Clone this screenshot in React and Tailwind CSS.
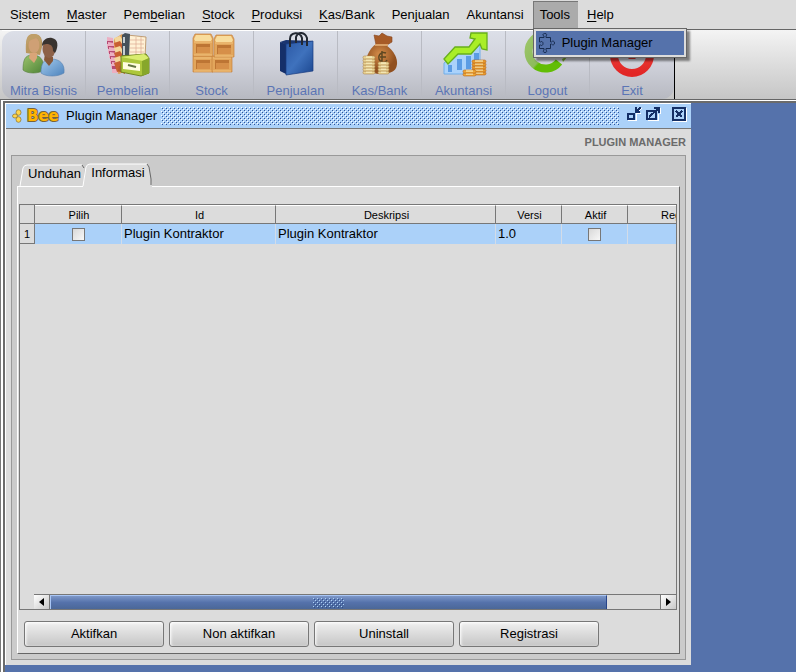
import React, { useState } from "react";

const MENUS = [
  { label: "Sistem", key: 1 },
  { label: "Master", key: 0 },
  { label: "Pembelian", key: 3 },
  { label: "Stock", key: 0 },
  { label: "Produksi", key: 0 },
  { label: "Kas/Bank", key: 0 },
  { label: "Penjualan", key: 3 },
  { label: "Akuntansi", key: -1 },
  { label: "Tools", key: -1, open: true },
  { label: "Help", key: 0 },
];

const COLUMNS = ["Pilih", "Id", "Deskripsi", "Versi", "Aktif", "Registrasi"];

// label with its keyboard shortcut letter underlined
function Mnemonic({ text, index }) {
  if (index < 0) return text;
  return (
    <>
      {text.slice(0, index)}
      <span className="underline underline-offset-2">{text[index]}</span>
      {text.slice(index + 1)}
    </>
  );
}

// raised dots used on title bars and scroll thumbs
function Bumps({ id, light, dark, className }) {
  return (
    <svg className={className} shapeRendering="crispEdges" aria-hidden="true">
      <defs>
        <pattern id={id} width="4" height="4" patternUnits="userSpaceOnUse">
          <path d="M0 0h1v1H0zM2 2h1v1H2z" fill={light} />
          <path d="M1 1h1v1H1zM3 3h1v1H3z" fill={dark} />
        </pattern>
      </defs>
      <rect width="100%" height="100%" fill={`url(#${id})`} />
    </svg>
  );
}

function PeopleIcon() {
  return (
    <>
      <defs>
        <linearGradient id="green-body" x1="0" y1="0" x2="1" y2="1">
          <stop offset="0" stopColor="#9dc46e" />
          <stop offset="1" stopColor="#4d8236" />
        </linearGradient>
        <linearGradient id="blue-body" x1="0" y1="0" x2="1" y2="1">
          <stop offset="0" stopColor="#a5cbed" />
          <stop offset="1" stopColor="#4d83bd" />
        </linearGradient>
      </defs>
      <path d="M6 22C5 10 7 3 14 3c6 0 9 4 8 13l-2 8z" fill="#b9975f" />
      <path d="M3 39c0-10 2-15 9-15 8 0 12 4 12 15-5 4-17 4-21 0z" fill="url(#green-body)" stroke="#557d3b" strokeWidth=".6" />
      <path d="M10 22h7v5l-3 5-5-5z" fill="#d9a578" />
      <ellipse cx="14" cy="14" rx="5.500" ry="8" fill="#cfa075" />
      <path d="M7 19c-1-10 5-10 9-12 3 1 4 4 4 9 3-9-1-13-7-13S5 8 7 19z" fill="#bf9f69" />
      <path d="M21 42c0-10 3-14 10-14 9 0 14 5 13 14-6 4-18 4-23 0z" fill="url(#blue-body)" stroke="#557fae" strokeWidth=".6" />
      <path d="M25 23l8 3v4l-4 5-5-6z" fill="#87583a" />
      <ellipse cx="29" cy="18" rx="6.500" ry="9" fill="#8d6148" />
      <path d="M22 15c0-6 5-9 10-8 6 1 7 8 3 15l-2-2c0-4-1-6-5-7-2 0-4 0-6 2z" fill="#39332f" />
    </>
  );
}

function FilesIcon() {
  return (
    <>
      <path d="M10 8l8-5 4 3v34l-7 3-7-4z" fill="#de9d55" />
      <path d="M23 4l19 2-1 21-19 3z" fill="#fff1d5" stroke="#b58a5a" strokeWidth=".8" />
      <path d="M26 9h14M26 13h14M26 17h14M26 21h14M32 6v19M37 6v19" stroke="#dca993" strokeWidth=".7" />
      <path d="M18 4l3-2 5 1-1 24-7 1z" fill="#46515a" />
      <path d="M19 6h2v6h-2zM19 15h2v9h-2z" fill="#c6ced2" />
      {[0, 1, 2, 3, 4, 5].map((i) => (
        <g key={i}>
          <path d={`M${3 + i} ${6 + i * 5}l6 1v10h-6z`} fill="#ecafc2" />
          <path d={`M${3 + i} ${10 + i * 5}h6v3h-6z`} fill="#b64a72" />
          <path d={`M10 ${7 + i * 5}l6-2 2 3v7l-5 1z`} fill={i % 2 ? "#c85f32" : "#f4d79b"} />
        </g>
      ))}
      <path d="M15 35l6 1v7l-7-3z" fill="#b9592c" />
      <path d="M17 25l25-2 3 4v15l-8 3-20-4z" fill="#adc73c" stroke="#718622" />
      <path d="M17 26l22 4 6-3-5-4z" fill="#d9ec6e" />
      <path d="M38 30l7-3v15l-7 3z" fill="#87a72b" />
      <path d="M19 31l17 2v7l-17-2z" fill="#fffde0" />
      <path d="M24 34l8 2" stroke="#637341" strokeWidth="2" />
    </>
  );
}

function Crate({ x, y, top }) {
  return (
    <g transform={`translate(${x} ${y})`}>
      <path d={top ? "M0 4l2-4h16l2 4v18H0z" : "M0 0h20v16H0z"} fill="#e2a65c" stroke="#c5813d" strokeWidth=".7" />
      {top && <path d="M1 5l2-4h14l2 4-1 2H2z" fill="#f8dc9c" />}
      <path d={top ? "M3 10h14v9H3z" : "M3 4h14v9H3z"} fill="#bd7534" />
      <path d={top ? "M4 13h13v6H4z" : "M4 7h13v6H4z"} fill="#d68f49" />
      <path d={top ? "M1 21h18M1 8h18" : "M1 15h18M1 2h18"} stroke="#f1c27c" />
    </g>
  );
}

function CratesIcon() {
  return (
    <>
      <Crate x={5} y={25} />
      <Crate x={24} y={25} />
      <Crate x={5} y={3} top />
      <Crate x={26} y={4} top />
    </>
  );
}

function BagIcon() {
  return (
    <>
      <defs>
        <linearGradient id="bag" x1="0" y1="0" x2="1" y2="1">
          <stop offset="0" stopColor="#2b58a5" />
          <stop offset=".5" stopColor="#3f72bd" />
          <stop offset="1" stopColor="#1b468f" />
        </linearGradient>
      </defs>
      <path d="M8 11l6 2v30l-6-3z" fill="#152f69" />
      <path d="M8 11l6-2 27 1-3 2-24 2z" fill="#1a3571" />
      <path d="M14 13l27-3v30l-27 4z" fill="url(#bag)" stroke="#193b80" strokeWidth=".7" />
      <path d="M18 16V8c0-7 10-8 12-1v7M24 12V6c2-6 9-5 11 1v8" fill="none" stroke="#222832" strokeWidth="2" />
    </>
  );
}

function Coins({ x, y, rows, width, color, edge }) {
  return Array.from({ length: rows }, (_, i) => (
    <g key={i}>
      <rect x={x} y={y - i * 3} width={width} height="3" rx="1.500" fill={color} stroke={edge} strokeWidth=".6" />
      <path d={`M${x + 3} ${y + 1 - i * 3}h${width - 6}`} stroke="#fffbd1" />
    </g>
  ));
}

function MoneyIcon() {
  return (
    <>
      <defs>
        <radialGradient id="sack" cx=".45" cy=".35">
          <stop offset="0" stopColor="#d8904c" />
          <stop offset="1" stopColor="#91501f" />
        </radialGradient>
      </defs>
      <path d="M18 4l5 1 3-3 5 3 5 1v5l-5 3H20z" fill="#a75b27" stroke="#84451f" strokeWidth=".6" />
      <path d="M20 13c-7 5-12 15-9 24 4 8 25 8 29 0 4-9-4-20-12-24z" fill="url(#sack)" />
      <path d="M19 14h13" stroke="#d9a168" strokeWidth="2" />
      <path d="M30 22c-7-3-10 7-4 9 2 1 4 0 5-2M24 26h6M26 20v12" fill="none" stroke="#5e4721" strokeWidth="1.500" />
      <Coins x={7} y={40} rows={6} width={12} color="#e9d394" edge="#ae884b" />
      <Coins x={22} y={40} rows={4} width={11} color="#e9d394" edge="#ae884b" />
    </>
  );
}

function ChartIcon() {
  return (
    <>
      <path d="M4 32l13-10 14-1 9-9v31H4z" fill="#aad2fb" stroke="#70aee9" />
      <path d="M8 34h4v7H8zM17 28h5v11h-5zM26 25h5v13h-5zM34 22h5v12h-5z" fill="#5b9ce4" />
      <path d="M4 28l11-12h14l6-8-5-1 1-5h16v17l-5-1-2-5-9 10H18L8 33z" fill="#a9ee27" stroke="#67af1c" strokeWidth="1.300" />
      <Coins x={32} y={41} rows={5} width={14} color="#e79a2d" edge="#b9681d" />
      <Coins x={23} y={42} rows={2} width={13} color="#efa634" edge="#b9681d" />
    </>
  );
}

function LogoutIcon() {
  return (
    <>
      <defs>
        <linearGradient id="ring-green" x1="0" y1="0" x2="1" y2="1">
          <stop offset="0" stopColor="#9dc66a" />
          <stop offset=".55" stopColor="#8dbb5c" />
          <stop offset=".6" stopColor="#62bd05" />
        </linearGradient>
      </defs>
      <path d="M34 9a17 17 0 1 0 1 22" fill="none" stroke="url(#ring-green)" strokeWidth="8" />
      <path d="M38 28l6-3-5 6z" fill="#78a831" />
    </>
  );
}

function PowerIcon() {
  return (
    <>
      <defs>
        <linearGradient id="ring-red" x1="0" y1="0" x2="0" y2="1">
          <stop offset="0" stopColor="#f04a42" />
          <stop offset="1" stopColor="#e22626" />
        </linearGradient>
      </defs>
      <circle cx="24" cy="24" r="18" fill="none" stroke="url(#ring-red)" strokeWidth="8" />
      <path d="M24 8v20" stroke="#db3030" strokeWidth="7" />
    </>
  );
}

function PuzzleIcon() {
  return (
    <svg viewBox="0 0 18 20" className="h-5 w-[18px]" fill="none" stroke="#182c50" aria-hidden="true">
      <path d="M1.500 4.500H6V3c-2-1-1-2.500 1-2.500S9 2 8 3v1.500h4.500V9h1c1-1.500 3-1 3 1s-2 2.500-3 1h-1v4.500H8V17c1 1 1 2.500-1 2.500S5 18 6 17v-1.500H1.500V12h1c1 1 2.500.500 2.500-1.500S3.500 8 2.500 9h-1z" />
    </svg>
  );
}

function BeeLogo() {
  return (
    <div className="flex shrink-0 items-center gap-0.5" aria-label="Bee">
      <svg viewBox="0 0 10 14" className="h-[14px] w-[10px]" aria-hidden="true">
        <g fill="#ffd64d" stroke="#8c7128" strokeWidth=".7">
          <ellipse cx="6.500" cy="3.500" rx="2.500" ry="2.800" />
          <ellipse cx="3" cy="7" rx="2.500" ry="2" />
          <ellipse cx="6.500" cy="10.500" rx="2.500" ry="2.800" />
        </g>
      </svg>
      <svg viewBox="0 0 38 20" className="h-5 w-[38px]" aria-hidden="true">
        <text
          x="3"
          y="15"
          fontFamily="DejaVu Sans, sans-serif"
          fontSize="15"
          fontWeight="700"
          fill="#ffb400"
          stroke="#75633c"
          strokeWidth="2"
          strokeLinejoin="round"
          paintOrder="stroke"
        >
          Bee
        </text>
      </svg>
    </div>
  );
}

const TOOLS = [
  { label: "Mitra Bisnis", Icon: PeopleIcon },
  { label: "Pembelian", Icon: FilesIcon },
  { label: "Stock", Icon: CratesIcon },
  { label: "Penjualan", Icon: BagIcon },
  { label: "Kas/Bank", Icon: MoneyIcon },
  { label: "Akuntansi", Icon: ChartIcon },
  { label: "Logout", Icon: LogoutIcon },
  { label: "Exit", Icon: PowerIcon },
];

function MenuBar() {
  return (
    <nav className="flex h-[29px] shrink-0 gap-px bg-[#dcdcdc] pt-px pl-0.5">
      {MENUS.map((m) => (
        <div key={m.label} className="relative">
          <button
            className={
              m.open
                ? "h-7 border-y border-l border-[#777] border-b-[#ababab] bg-[#ababab] pr-2 pl-1.5"
                : "h-7 px-2"
            }
          >
            <Mnemonic text={m.label} index={m.key} />
          </button>
          {m.open && (
            <div className="absolute top-[27px] left-0 z-10 border border-[#666] bg-[#dcdcdc] p-0.5 shadow-[3px_3px_2px_rgba(0,0,0,0.45)]">
              <button className="flex h-6 w-[148px] items-center gap-1.5 bg-[#5572ab] pl-0.5 whitespace-nowrap">
                <PuzzleIcon />
                Plugin Manager
              </button>
            </div>
          )}
        </div>
      ))}
    </nav>
  );
}

function ToolBar() {
  return (
    <div className="flex h-[71px] shrink-0 border-t border-b border-[#666] bg-linear-to-b from-[#f4f4f4] to-[#c6c6c6] pl-0.5">
      <div className="flex border-t border-r border-t-white border-r-black">
        <div className="flex overflow-hidden rounded-xl bg-linear-to-b from-[#dcdfe8] via-[#cfd1da] to-[#b7b9c1]">
          {TOOLS.map(({ label, Icon }) => (
            <button
              key={label}
              className="flex w-[84px] flex-col items-center border-r border-[#b9bbc3] text-[#5b75b5] last:border-r-0"
            >
              <svg viewBox="0 0 48 48" className="size-12 shrink-0" aria-hidden="true">
                <Icon />
              </svg>
              <span className="pt-1 leading-4">{label}</span>
            </button>
          ))}
        </div>
      </div>
    </div>
  );
}

function TitleBar() {
  return (
    <div className="flex h-[25px] shrink-0 items-center border-b border-[#777] bg-[#abd1f9] pr-1 pl-1.5">
      <BeeLogo />
      <h1 className="ml-1 whitespace-nowrap">Plugin Manager</h1>
      <Bumps id="title-bumps" light="#ffffff" dark="#2f539b" className="ml-1 h-[18px] min-w-0 flex-1" />
      <div className="mb-1 ml-2 flex items-center">
        <button aria-label="Minimize" className="mr-1">
          <svg viewBox="0 0 15 16" className="h-4 w-[15px]" shapeRendering="crispEdges" fill="none">
            <path d="M1 14.500h8V7M9 7.500h5M12 5l3-3" stroke="#fff" />
            <path d="M1 8h6v5H1z" stroke="#142f66" strokeWidth="2" />
            <path d="M8 1h2v2l3-2h1v2l-3 2h2v2H8z" fill="#142f66" />
          </svg>
        </button>
        <button aria-label="Maximize" className="mr-2.5">
          <svg viewBox="0 0 15 16" className="h-4 w-[15px]" shapeRendering="crispEdges" fill="none">
            <path d="M2 14.500h10V8M14.500 2v6" stroke="#fff" />
            <path d="M1 5h9v8H1z" stroke="#142f66" strokeWidth="2" />
            <path d="M3 11l9-8" stroke="#142f66" strokeWidth="2" />
            <path d="M8 1h6v6h-2V3H8z" fill="#142f66" />
          </svg>
        </button>
        <button aria-label="Close">
          <svg viewBox="0 0 16 16" className="size-4" shapeRendering="crispEdges" fill="none">
            <path d="M15.500 2v13.500H2" stroke="#fff" />
            <path d="M2 2h12v12H2z" stroke="#142f66" strokeWidth="2" />
            <path d="M5 5l6 6M11 5l-6 6" stroke="#142f66" strokeWidth="2" />
          </svg>
        </button>
      </div>
    </div>
  );
}

function Tabs() {
  return (
    <div role="tablist" className="relative z-[1] -mb-px flex items-end pl-0.5">
      <button role="tab" aria-selected="false" className="relative mb-px h-[22px] w-[67px] pb-0.5 pl-1">
        <svg viewBox="0 0 67 22" className="absolute inset-0 h-full w-full" fill="none" aria-hidden="true">
          <path d="M1 22L4 4q1-3 4-3h55l2 3v18z" fill="#d6d6d6" />
          <path d="M1 22L4 4q1-3 4-3h55" stroke="#fff" />
          <path d="M63 1l2 3" stroke="#666" />
        </svg>
        <span className="relative">Unduhan</span>
      </button>
      <button role="tab" aria-selected="true" className="relative -ml-1 h-6 w-[72px] pb-1">
        <svg viewBox="0 0 72 24" className="absolute inset-0 h-full w-full" fill="none" aria-hidden="true">
          <path d="M1 24L4 4q1-3 4-3h57l2 3 3 20z" fill="#dcdcdc" />
          <path d="M1 23L4 4q1-3 4-3h57" stroke="#fff" />
          <path d="M65 1l2 3 2 12v6" stroke="#666" />
        </svg>
        <span className="relative">Informasi</span>
      </button>
    </div>
  );
}

function CheckBox({ label, checked, onChange }) {
  return (
    <input
      type="checkbox"
      aria-label={label}
      checked={checked}
      onChange={onChange}
      className="mx-auto block size-[13px] appearance-none border border-[#777] bg-linear-to-br from-[#d8d8d8] to-[#f8f8f8] checked:from-[#5572ab]"
    />
  );
}

function PluginTable() {
  const [picked, setPicked] = useState(false);
  const [active, setActive] = useState(false);

  return (
    <div className="min-h-0 flex-1 overflow-hidden">
      <table className="w-[722px] table-fixed border-separate border-spacing-0">
        <colgroup>
          <col className="w-[15px]" />
          <col className="w-[87px]" />
          <col className="w-[154px]" />
          <col className="w-[220px]" />
          <col className="w-[66px]" />
          <col className="w-[66px]" />
          <col className="w-[114px]" />
        </colgroup>
        <thead>
          <tr className="h-[19px] text-[11px] leading-4">
            <td className="border-r border-b border-[#777] p-0" />
            {COLUMNS.map((c) => (
              <th key={c} scope="col" className="border-t border-r border-b border-t-white border-r-[#777] border-b-[#777] p-0 pl-0.5 font-normal">
                {c}
              </th>
            ))}
          </tr>
        </thead>
        <tbody>
          <tr className="h-5 bg-[#abd1f9]">
            <th scope="row" className="border-r border-b border-[#777] bg-[#dcdcdc] p-0 text-[11px] font-normal">
              1
            </th>
            <td className="border-r border-[#d3dce8] p-0">
              <CheckBox label="Pilih" checked={picked} onChange={() => setPicked(!picked)} />
            </td>
            <td className="border-r border-[#d3dce8] p-0 pl-0.5">Plugin Kontraktor</td>
            <td className="border-r border-[#d3dce8] p-0 pl-0.5">Plugin Kontraktor</td>
            <td className="border-r border-[#d3dce8] p-0 pl-0.5">1.0</td>
            <td className="border-r border-[#d3dce8] p-0">
              <CheckBox label="Aktif" checked={active} onChange={() => setActive(!active)} />
            </td>
            <td className="p-0" />
          </tr>
        </tbody>
      </table>
    </div>
  );
}

function ScrollBar() {
  return (
    <div className="ml-3.5 flex h-[15px] shrink-0 border-t border-[#777]">
      <button aria-label="Scroll left" className="flex w-4 items-center justify-center border-r border-[#777] bg-linear-to-br from-white to-[#c8c8c8]">
        <svg viewBox="0 0 5 8" className="h-2 w-[5px]" aria-hidden="true">
          <path d="M5 0v8L0 4z" />
        </svg>
      </button>
      <div className="flex min-w-0 flex-1 pr-[53px]">
        <div className="flex flex-1 items-center justify-center border-t border-r border-l border-t-[#a9c6f5] border-r-[#27448a] border-l-[#a9c6f5] bg-linear-to-b from-[#7d97c8] via-[#5572ab] to-[#4b6798]">
          <Bumps id="thumb-bumps" light="#abd1f9" dark="#2f4f8f" className="h-2.5 w-[31px]" />
        </div>
      </div>
      <button aria-label="Scroll right" className="flex w-4 items-center justify-center border-l border-[#777] bg-linear-to-br from-white to-[#c8c8c8]">
        <svg viewBox="0 0 5 8" className="h-2 w-[5px]" aria-hidden="true">
          <path d="M0 0v8l5-4z" />
        </svg>
      </button>
    </div>
  );
}

function PluginWindow() {
  return (
    <section className="flex min-h-0 flex-1 flex-col border-t border-l border-white bg-[#dcdcdc]">
      <TitleBar />
      <h2 className="shrink-0 pr-[5px] text-right text-[11px] leading-[26px] font-bold text-[#6b6b6b]">
        PLUGIN MANAGER
      </h2>
      <div className="mx-[5px] mb-[5px] flex min-h-0 flex-1 flex-col border border-[#999] bg-[#cbcbcb] px-[5px] pt-[7px] pb-[5px]">
        <Tabs />
        <div role="tabpanel" className="flex min-h-0 flex-1 flex-col border border-t-white border-r-[#666] border-b-[#666] border-l-white bg-[#dcdcdc] pt-[17px] pr-0.5 pb-1.5 pl-px">
          <div className="flex min-h-0 flex-1 flex-col border border-[#777]">
            <PluginTable />
            <ScrollBar />
          </div>
          <div className="flex gap-[5px] pt-[11px] pl-[5px]">
            {["Aktifkan", "Non aktifkan", "Uninstall", "Registrasi"].map((b) => (
              <button
                key={b}
                className="h-[26px] w-[140px] rounded-[3px] border border-[#777] bg-linear-to-b from-[#f0f0f0] to-[#c6c6c6] shadow-[inset_1px_1px_3px_#fff]"
              >
                {b}
              </button>
            ))}
          </div>
        </div>
      </div>
    </section>
  );
}

export default function App() {
  return (
    <div className="flex h-screen flex-col bg-white font-['Liberation_Sans',Arial,sans-serif] text-[13px] leading-4 text-black">
      <MenuBar />
      <ToolBar />
      <main className="flex min-h-0 flex-1 border-l border-[#777] pt-px pl-0.5">
        <div className="flex min-w-0 flex-1 flex-col border-t-2 border-l-2 border-[#6b6b6b] bg-[#5572ab] pr-[105px] pb-[7px]">
          <PluginWindow />
        </div>
      </main>
    </div>
  );
}
